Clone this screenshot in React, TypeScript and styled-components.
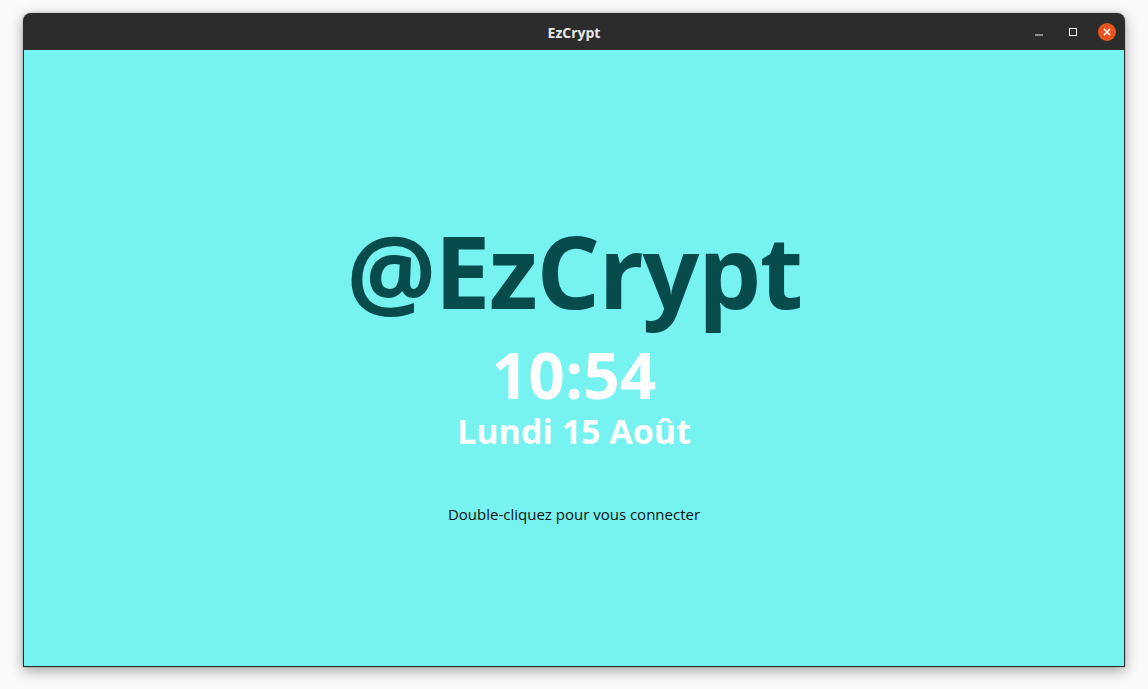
import React from 'react';
import styled, { createGlobalStyle } from 'styled-components';

const GlobalStyle = createGlobalStyle`
  html, body {
    margin: 0;
    padding: 0;
    background: #fafafa;
    font-family: 'Open Sans', 'Noto Sans', 'DejaVu Sans', sans-serif;
  }
`;

const Desktop = styled.div`
  width: 1148px;
  height: 689px;
  padding: 13px 23px 22px 23px;
  box-sizing: border-box;
  display: flex;
`;

const Window = styled.div`
  flex: 1;
  display: flex;
  flex-direction: column;
  border-radius: 8px 8px 0 0;
  overflow: hidden;
  background: #2c2c2c;
  box-shadow: 0 4px 14px rgba(0, 0, 0, 0.35), 0 0 2px rgba(0, 0, 0, 0.3);
`;

const TitleBar = styled.div`
  height: 37px;
  flex-shrink: 0;
  display: grid;
  grid-template-columns: 1fr auto 1fr;
  align-items: center;
  color: #e8e8e8;
  font-family: 'Open Sans', 'Noto Sans', sans-serif;
  font-weight: 700;
  font-size: 14px;
`;

const Title = styled.div`
  grid-column: 2;
  padding-top: 1px;
`;

const Controls = styled.div`
  grid-column: 3;
  justify-self: end;
  display: flex;
  align-items: center;
  gap: 16px;
  padding-right: 9px;
`;

const CtrlButton = styled.div<{ $close?: boolean }>`
  width: 18px;
  height: 18px;
  border-radius: 50%;
  display: flex;
  align-items: center;
  justify-content: center;
  background: ${(p) => (p.$close ? '#e95420' : 'transparent')};
`;

const Content = styled.main`
  flex: 1;
  margin: 0 1px 1px 1px;
  background: #76f2f0;
  display: flex;
  flex-direction: column;
  align-items: center;
  padding-top: 170px;
  font-family: 'Open Sans', 'Noto Sans', sans-serif;
`;

const Brand = styled.h1`
  margin: 0;
  font-size: 100px;
  line-height: 100px;
  font-weight: 700;
  color: #074b4d;
  letter-spacing: -1.5px;
`;

const Clock = styled.div`
  margin-top: 23px;
  font-size: 64px;
  line-height: 64px;
  font-weight: 700;
  color: #ffffff;
`;

const DateLine = styled.div`
  margin-top: 7px;
  font-size: 34px;
  line-height: 34px;
  font-weight: 700;
  color: #ffffff;
`;

const Hint = styled.p`
  margin: 59px 0 0 0;
  font-size: 15px;
  line-height: 15px;
  color: #111;
`;

export default function App() {
  return (
    <>
      <GlobalStyle />
      <Desktop>
        <Window>
          <TitleBar>
            <Title>EzCrypt</Title>
            <Controls>
              <CtrlButton>
                <svg width="10" height="10" viewBox="0 0 10 10">
                  <line x1="1" y1="8" x2="9" y2="8" stroke="#eee" strokeWidth="1" />
                </svg>
              </CtrlButton>
              <CtrlButton>
                <svg width="10" height="10" viewBox="0 0 10 10">
                  <rect x="1.5" y="1.5" width="7" height="7" fill="none" stroke="#eee" strokeWidth="1" />
                </svg>
              </CtrlButton>
              <CtrlButton $close>
                <svg width="10" height="10" viewBox="0 0 10 10">
                  <path d="M2 2 L8 8 M8 2 L2 8" stroke="#fff" strokeWidth="1.6" />
                </svg>
              </CtrlButton>
            </Controls>
          </TitleBar>
          <Content>
            <Brand>@EzCrypt</Brand>
            <Clock>10:54</Clock>
            <DateLine>Lundi 15 Août</DateLine>
            <Hint>Double-cliquez pour vous connecter</Hint>
          </Content>
        </Window>
      </Desktop>
    </>
  );
}
